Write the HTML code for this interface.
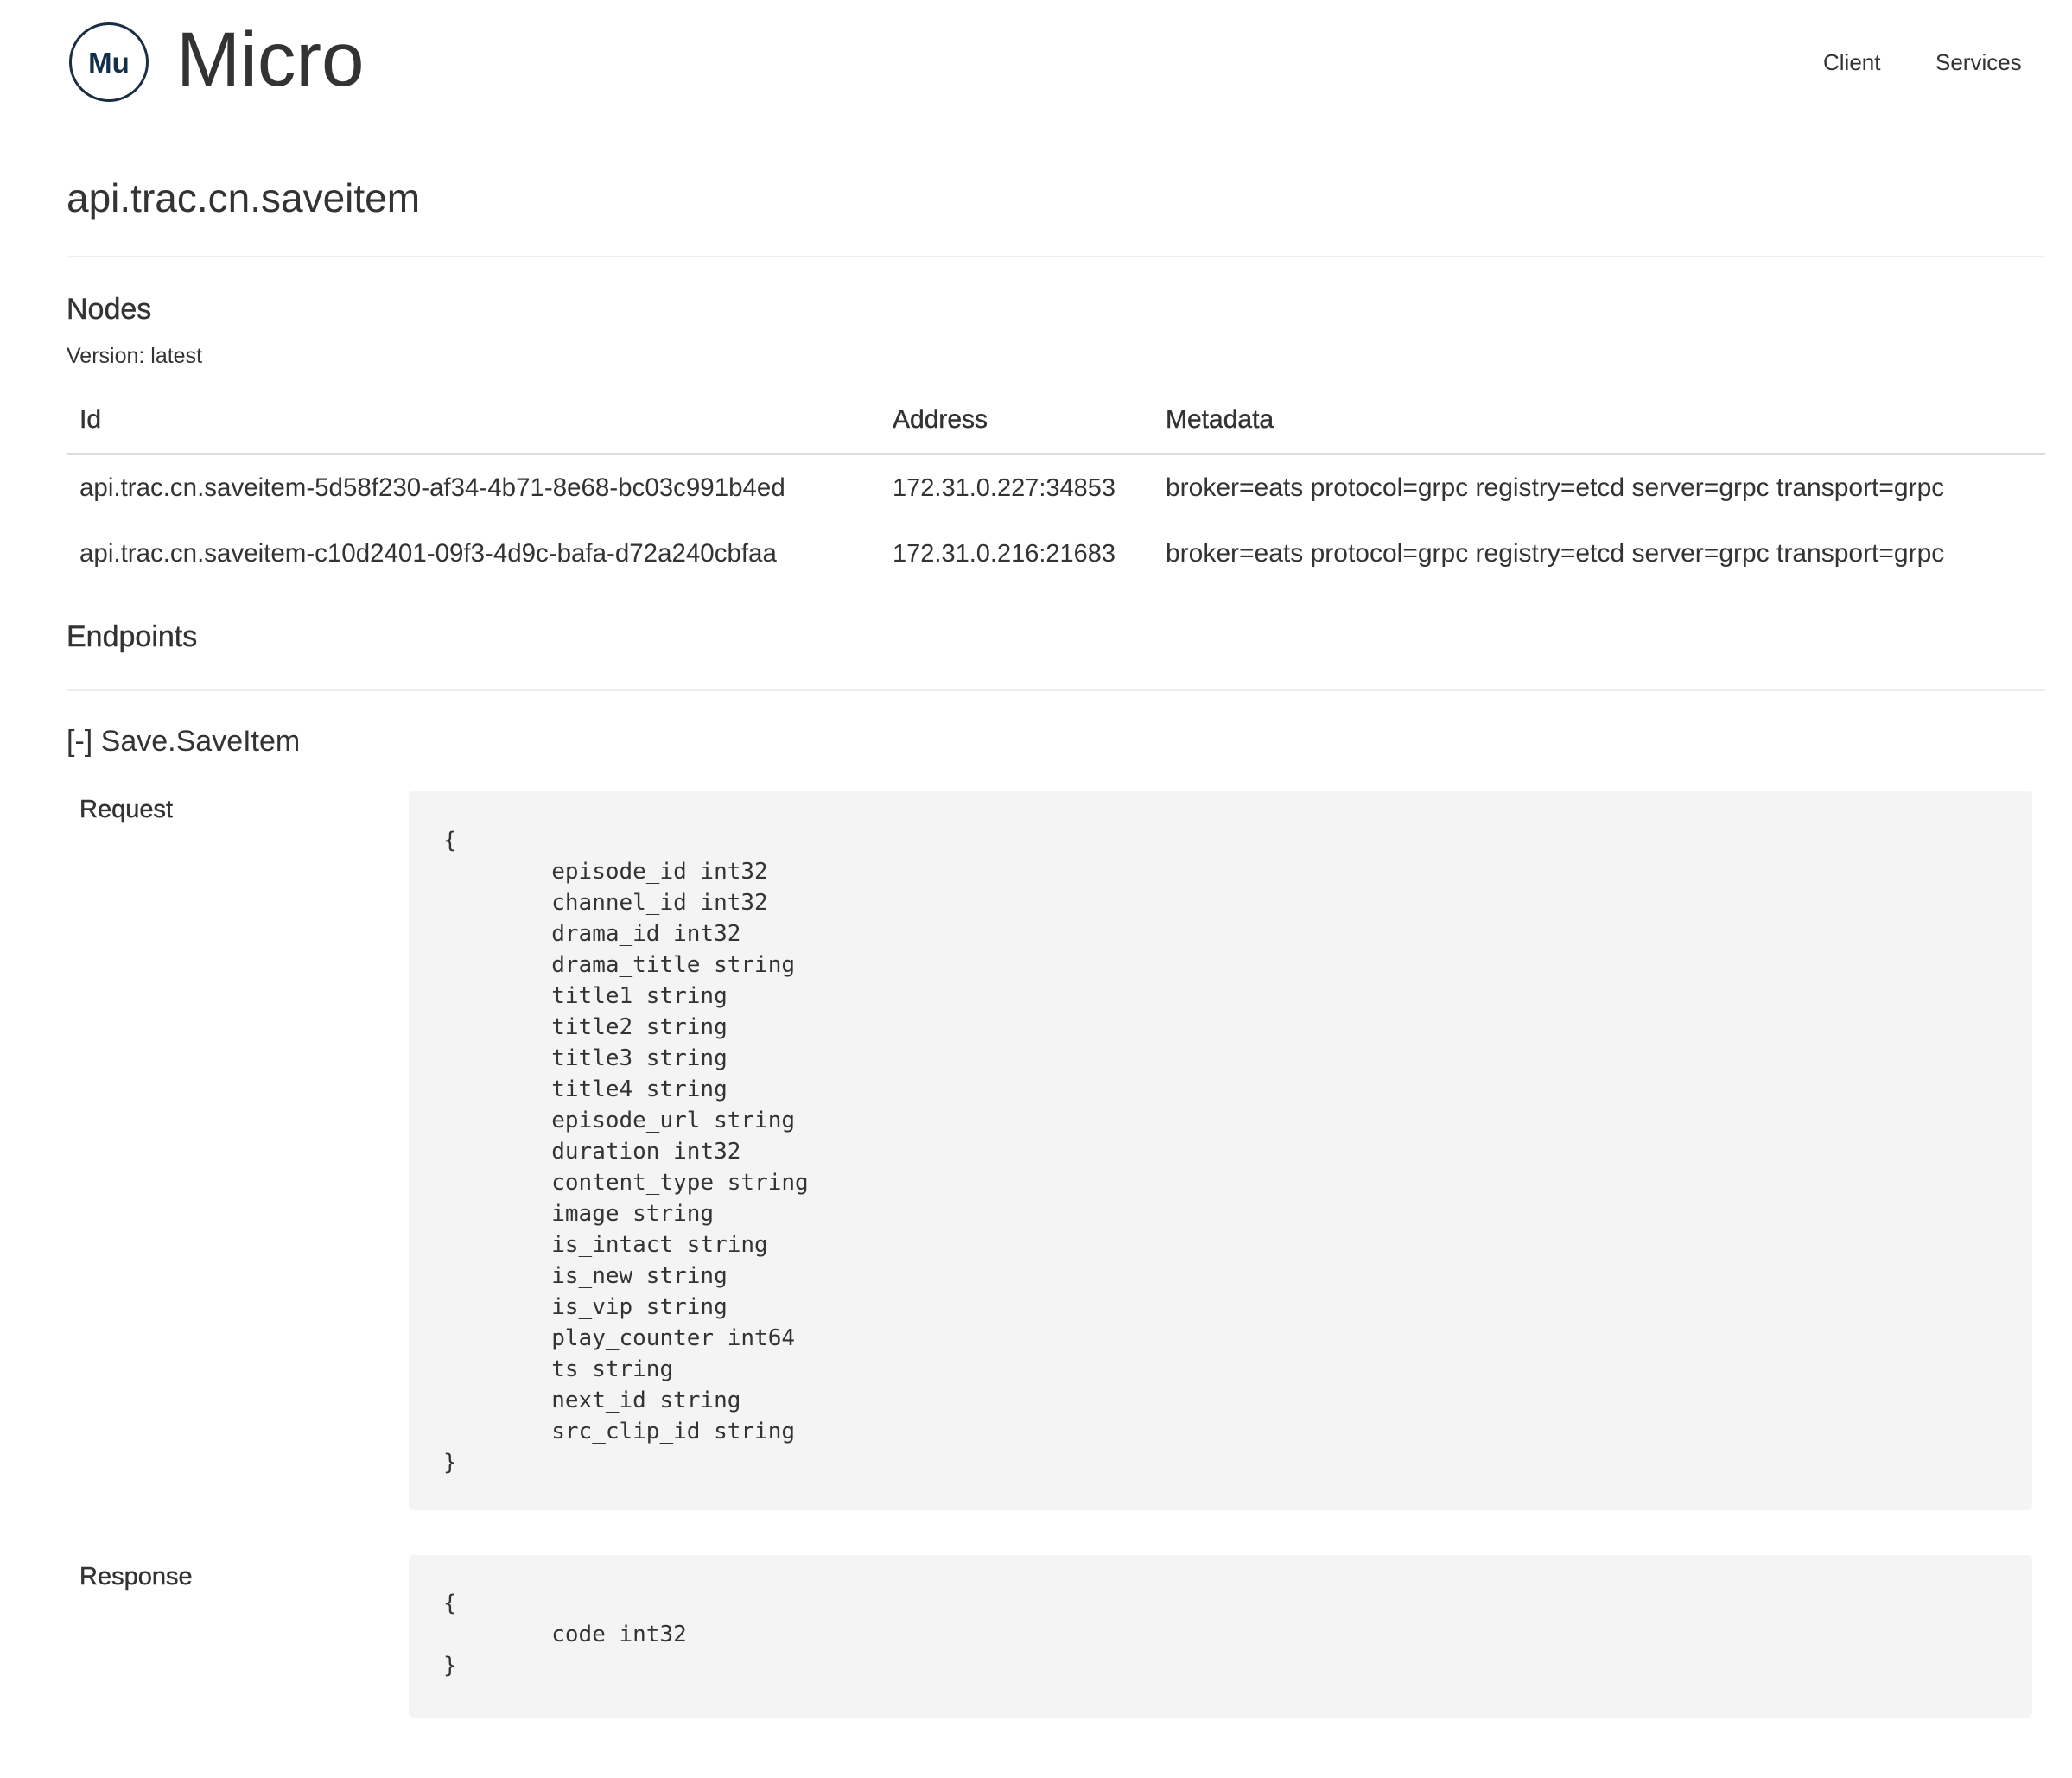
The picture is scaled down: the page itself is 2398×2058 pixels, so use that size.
<!DOCTYPE html>
<html><head><meta charset="utf-8"><style>
html,body{margin:0;padding:0;background:#fff;}
body{width:2398px;height:2058px;position:relative;overflow:hidden;font-family:"Liberation Sans",sans-serif;color:#333;}
.a{position:absolute;white-space:nowrap;}
.hr{position:absolute;left:77px;width:2290px;height:2px;background:#eee;}
.box{position:absolute;left:473px;width:1879px;background:#f4f4f4;border-radius:6px;}
pre{position:absolute;margin:0;font-family:"DejaVu Sans Mono","Liberation Mono",monospace;font-size:26px;line-height:36px;color:#333;tab-size:8;-moz-tab-size:8;}
</style></head><body>
<svg class="a" style="left:78px;top:24px" width="96" height="96" viewBox="0 0 96 96">
<circle cx="48" cy="48" r="44.5" fill="none" stroke="#1a2e44" stroke-width="3"/>
<text x="48" y="60" text-anchor="middle" font-family="Liberation Sans" font-weight="bold" font-size="33" fill="#13304a">Mu</text>
</svg>
<div class="a" style="left:204px;top:12px;font-size:89px;line-height:112px;color:#333">Micro</div>
<div class="a" style="left:2110px;top:56px;font-size:26px;line-height:32px">Client</div>
<div class="a" style="left:2240px;top:56px;font-size:26px;line-height:32px">Services</div>

<div class="a" style="left:77px;top:203px;font-size:46px;line-height:52px">api.trac.cn.saveitem</div>
<div class="hr" style="top:296px"></div>
<div class="a" style="left:77px;top:338px;font-size:34px;line-height:40px;font-weight:500;-webkit-text-stroke:0.4px #333">Nodes</div>
<div class="a" style="left:77px;top:397px;font-size:25px;line-height:30px">Version: latest</div>

<div class="a" style="left:92px;top:469px;font-size:30px;line-height:34px;-webkit-text-stroke:0.4px #333">Id</div>
<div class="a" style="left:1033px;top:469px;font-size:30px;line-height:34px;-webkit-text-stroke:0.4px #333">Address</div>
<div class="a" style="left:1349px;top:469px;font-size:30px;line-height:34px;-webkit-text-stroke:0.4px #333">Metadata</div>
<div class="a" style="left:77px;top:524px;width:2290px;height:3px;background:#ddd"></div>

<div class="a" style="left:92px;top:548px;font-size:29.5px;line-height:34px">api.trac.cn.saveitem-5d58f230-af34-4b71-8e68-bc03c991b4ed</div>
<div class="a" style="left:1033px;top:548px;font-size:29px;line-height:34px">172.31.0.227:34853</div>
<div class="a" style="left:1349px;top:548px;font-size:30px;line-height:34px">broker=eats protocol=grpc registry=etcd server=grpc transport=grpc</div>
<div class="a" style="left:92px;top:624px;font-size:29.5px;line-height:34px">api.trac.cn.saveitem-c10d2401-09f3-4d9c-bafa-d72a240cbfaa</div>
<div class="a" style="left:1033px;top:624px;font-size:29px;line-height:34px">172.31.0.216:21683</div>
<div class="a" style="left:1349px;top:624px;font-size:30px;line-height:34px">broker=eats protocol=grpc registry=etcd server=grpc transport=grpc</div>

<div class="a" style="left:77px;top:717px;font-size:34px;line-height:40px;-webkit-text-stroke:0.4px #333">Endpoints</div>
<div class="hr" style="top:798px"></div>
<div class="a" style="left:77px;top:838px;font-size:34px;line-height:40px">[-] Save.SaveItem</div>

<div class="a" style="left:92px;top:920px;font-size:29px;line-height:34px;-webkit-text-stroke:0.4px #333">Request</div>
<div class="box" style="top:915px;height:833px"></div>
<pre style="left:513px;top:955px">{
	episode_id int32
	channel_id int32
	drama_id int32
	drama_title string
	title1 string
	title2 string
	title3 string
	title4 string
	episode_url string
	duration int32
	content_type string
	image string
	is_intact string
	is_new string
	is_vip string
	play_counter int64
	ts string
	next_id string
	src_clip_id string
}</pre>

<div class="a" style="left:92px;top:1808px;font-size:29px;line-height:34px;-webkit-text-stroke:0.4px #333">Response</div>
<div class="box" style="top:1800px;height:188px"></div>
<pre style="left:513px;top:1838px">{
	code int32
}</pre>
</body></html>
